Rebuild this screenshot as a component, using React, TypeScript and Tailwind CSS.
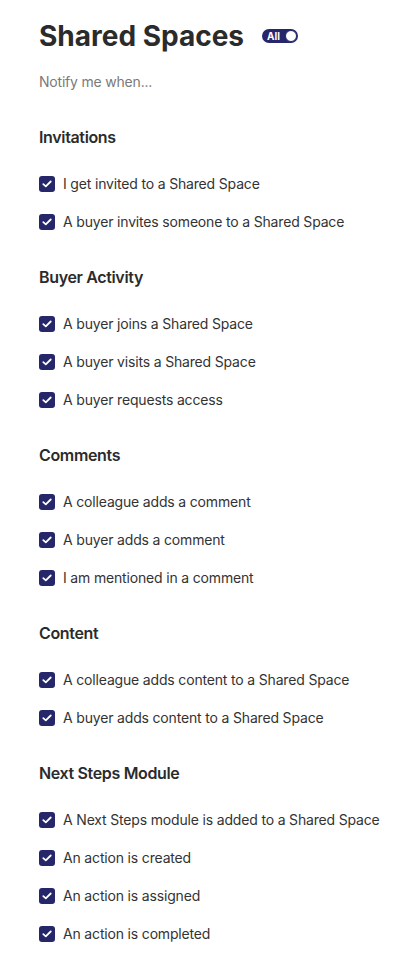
import React from 'react';

const sections = [
    { title: 'Invitations', items: ['I get invited to a Shared Space', 'A buyer invites someone to a Shared Space'] },
    { title: 'Buyer Activity', items: ['A buyer joins a Shared Space', 'A buyer visits a Shared Space', 'A buyer requests access'] },
    { title: 'Comments', items: ['A colleague adds a comment', 'A buyer adds a comment', 'I am mentioned in a comment'] },
    { title: 'Content', items: ['A colleague adds content to a Shared Space', 'A buyer adds content to a Shared Space'] },
    {
        title: 'Next Steps Module',
        items: ['A Next Steps module is added to a Shared Space', 'An action is created', 'An action is assigned', 'An action is completed'],
    },
];

function Check() {
    return (
        <span className="w-4 h-4 rounded-[3px] bg-[#26266a] flex items-center justify-center shrink-0">
            <svg width="10" height="8" viewBox="0 0 10 8" fill="none">
                <path d="M1.3 4.1 L3.8 6.4 L8.7 1.5" stroke="white" strokeWidth="1.8" strokeLinecap="round" strokeLinejoin="round" />
            </svg>
        </span>
    );
}

export default function App() {
    return (
        <div className="min-h-[960px] bg-white pl-[39px] pt-[18px] font-['Inter',sans-serif] text-[#2b2b2b]">
            {/* Header */}
            <div className="flex items-center gap-[18px] h-9">
                <h1 className="text-[28px] leading-9 font-bold">Shared Spaces</h1>
                <div className="w-9 h-[14px] rounded-full bg-[#26266a] flex items-center justify-between pl-[5px] pr-[1px]">
                    <span className="text-[10px] leading-none font-bold text-white">All</span>
                    <span className="w-3 h-3 rounded-full bg-white border-[1.5px] border-[#26266a]" />
                </div>
            </div>
            <p className="mt-[18px] text-[14px] leading-5 tracking-[-0.2px] text-[#7a7a7a]">Notify me when...</p>

            {sections.map(s => (
                <div key={s.title} className="mt-[33px]">
                    <h2 className="text-[16px] leading-6 font-semibold tracking-[-0.35px] text-[#2b2b2b]">{s.title}</h2>
                    <div className="mt-[25px] flex flex-col gap-[18px]">
                        {s.items.map(item => (
                            <label key={item} className="flex items-center gap-2 h-5">
                                <Check />
                                <span className="text-[14px] leading-5 tracking-[-0.17px] text-[#333]">{item}</span>
                            </label>
                        ))}
                    </div>
                </div>
            ))}
        </div>
    );
}
